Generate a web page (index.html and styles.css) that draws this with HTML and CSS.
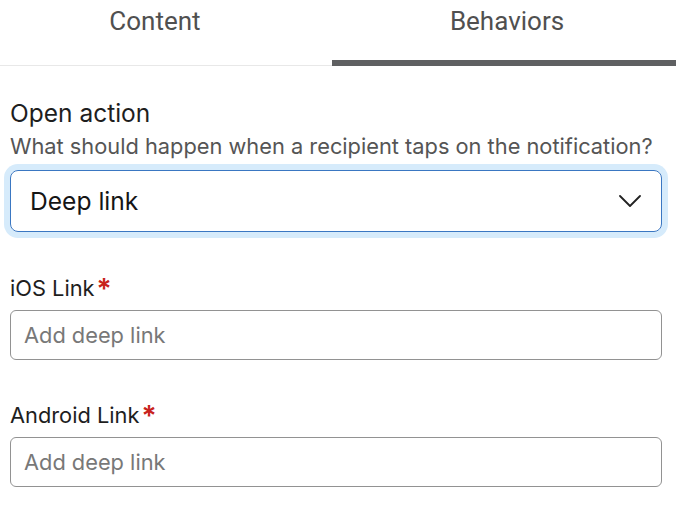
FILE: index.html
```html
<!DOCTYPE html>
<html lang="en">
<head>
    <meta charset="UTF-8">
    <meta name="viewport" content="width=device-width, initial-scale=1.0">
    <title>Behaviors</title>
    <link rel="stylesheet" href="styles.css">
</head>
<body>
    <nav class="tabs">
        <a class="tab" href="#content">Content</a>
        <a class="tab active" href="#behaviors">Behaviors</a>
    </nav>
    <main id="behaviors" class="panel">
        <h2 class="title">Open action</h2>
        <p class="hint">What should happen when a recipient taps on the notification?</p>
        <div class="select">
            <span class="select-value">Deep link</span>
            <svg class="chevron" width="22" height="12" viewBox="0 0 22 12">
                <polyline points="1,1 11,11 21,1" fill="none" stroke="#222" stroke-width="1.8" stroke-linecap="round" stroke-linejoin="round"/>
            </svg>
        </div>

        <label class="field-label" for="ios-link">iOS Link<span class="required">*</span></label>
        <input id="ios-link" class="field" type="text" placeholder="Add deep link">

        <label class="field-label" for="android-link">Android Link<span class="required">*</span></label>
        <input id="android-link" class="field" type="text" placeholder="Add deep link">
    </main>
</body>
</html>
```

FILE: styles.css
```css
* {
    margin: 0;
    padding: 0;
    box-sizing: border-box;
}
body {
    font-family: 'Inter', 'Liberation Sans', sans-serif;
    background-color: #fff;
    color: #222;
}
.tabs {
    display: flex;
    height: 66px;
    border-bottom: 1px solid #e8e8e8;
}
.tab {
    text-align: center;
    text-decoration: none;
    font-family: 'Roboto', 'Liberation Sans', sans-serif;
    color: #505050;
    font-size: 26px;
    line-height: 31px;
    padding-top: 6px;
}
.tab:first-child {
    width: 310px;
    margin-right: 22px;
}
.tab.active {
    flex: 1;
    padding-left: 6px;
    border-bottom: 6px solid #5f6062;
    border-top-left-radius: 6px;
    margin-bottom: -1px;
}
.panel {
    padding: 31px 14px 0 10px;
    display: flex;
    flex-direction: column;
}
.title {
    font-size: 24.5px;
    font-weight: 400;
    line-height: 32px;
    color: #1e1e1e;
}
.hint {
    margin-top: 4px;
    font-size: 21.8px;
    line-height: 26px;
    color: #555;
}
.select {
    margin-top: 11px;
    height: 62px;
    border: 1px solid #3a77c2;
    border-radius: 8px;
    box-shadow: 0 0 0 6px #d6ebfb;
    display: flex;
    align-items: center;
    justify-content: space-between;
    padding: 0 20px 0 19px;
}
.select-value {
    font-size: 24.6px;
    color: #151515;
}
.field-label {
    margin-top: 43px;
    font-size: 21.8px;
    line-height: 26px;
    color: #1e1e1e;
}
.field-label + .field + .field-label {
    margin-top: 42px;
}
.required {
    margin-left: 2px;
    color: #c8231c;
    font-weight: 600;
    font-size: 28px;
    line-height: 0;
    vertical-align: -3px;
}
.field {
    margin-top: 9px;
    height: 50px;
    border: 1px solid #929292;
    border-radius: 6px;
    padding: 0 13px;
    font-family: inherit;
    font-size: 21.8px;
    color: #222;
    outline: none;
}
.field::placeholder {
    color: #787878;
}
```
